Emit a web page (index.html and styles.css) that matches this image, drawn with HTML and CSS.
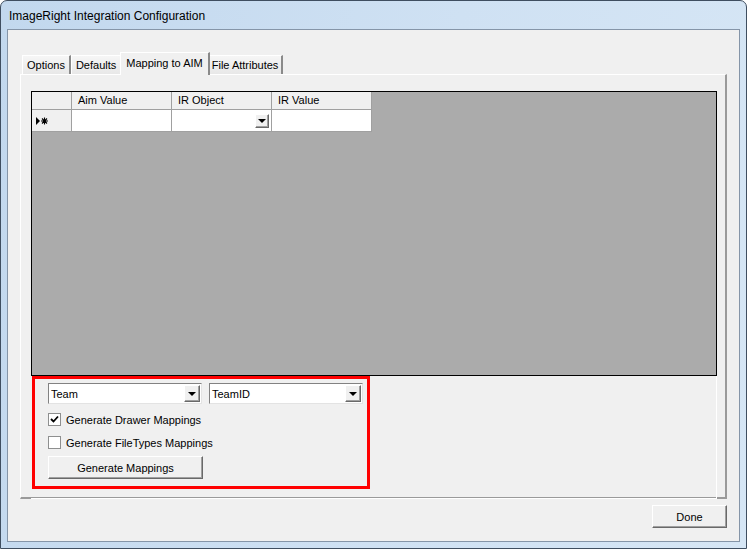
FILE: index.html
```html
<!DOCTYPE html>
<html lang="en">
<head>
  <meta charset="UTF-8" />
  <title>ImageRight Integration Configuration</title>
  <link rel="stylesheet" href="styles.css">
</head>
<body>
  <div class="window">
    <div class="titlebar">ImageRight Integration Configuration</div>
    <div class="client">
      <div class="tab-control">
        <div class="tab-strip">
          <div class="tab">Options</div>
          <div class="tab">Defaults</div>
          <div class="tab active">Mapping to AIM</div>
          <div class="tab">File Attributes</div>
        </div>
        <div class="tab-page">
          <div class="grid">
            <div class="grid-row header">
              <div class="cell row-head"></div>
              <div class="cell">Aim Value</div>
              <div class="cell">IR Object</div>
              <div class="cell">IR Value</div>
            </div>
            <div class="grid-row new-row">
              <div class="cell row-head">
                <svg width="12" height="8" viewBox="0 0 12 8">
                  <path d="M0 0 L4 4 L0 8 Z" fill="#000"/>
                  <path d="M8.5 0.5 V7.5 M5 4 H12 M6 1.5 L11 6.5 M11 1.5 L6 6.5" stroke="#000" stroke-width="1.1"/>
                </svg>
              </div>
              <div class="cell"></div>
              <div class="cell combo-cell"><span class="drop-btn small"><i class="arrow"></i></span></div>
              <div class="cell"></div>
            </div>
          </div>
          <div class="lower-panel">
            <div class="mapping-box">
              <div class="combo-row">
                <div class="combo"><span class="combo-text">Team</span><span class="drop-btn"><i class="arrow"></i></span></div>
                <div class="combo"><span class="combo-text">TeamID</span><span class="drop-btn"><i class="arrow"></i></span></div>
              </div>
              <label class="check"><span class="box checked">
                <svg width="9" height="9" viewBox="0 0 9 9"><path d="M1 4 L3.5 6.5 L8 1.5" fill="none" stroke="#000" stroke-width="1.8"/></svg>
              </span>Generate Drawer Mappings</label>
              <label class="check"><span class="box"></span>Generate FileTypes Mappings</label>
              <div class="button wide">Generate Mappings</div>
            </div>
          </div>
        </div>
      </div>
      <div class="footer">
        <div class="button done">Done</div>
      </div>
    </div>
  </div>
</body>
</html>
```

FILE: styles.css
```css
* { box-sizing: border-box; }
html, body {
  margin: 0;
  padding: 0;
  width: 747px;
  height: 549px;
  overflow: hidden;
  background: #fff;
  font-family: "Liberation Sans", Arial, sans-serif;
  font-size: 11px;
  color: #000;
}

/* window frame */
.window {
  width: 747px;
  height: 549px;
  display: flex;
  flex-direction: column;
  border: 1px solid #3f4e60;
  border-radius: 7px 7px 0 0;
  background: linear-gradient(100deg, #c2d8ee 0%, #cfe1f3 55%, #d6e6f5 100%);
  padding: 0 6px 6px 6px;
}
.titlebar {
  height: 28px;
  flex: none;
  display: flex;
  align-items: center;
  padding: 1px 0 0 2px;
  font-family: "Liberation Sans", Arial, sans-serif;
  font-size: 12px;
  color: #000;
}
.client {
  flex: 1;
  display: flex;
  flex-direction: column;
  background: #f0f0f0;
  border: 1px solid #8595a8;
  padding: 22px 12px 0 12px;
}

/* tabs */
.tab-control {
  display: flex;
  flex-direction: column;
}
.tab-strip {
  display: flex;
  height: 22px;
  padding-left: 2px;
}
.tab {
  height: 19px;
  margin-top: 3px;
  padding: 0 4px;
  line-height: 18px;
  background: linear-gradient(#f6f6f6, #e8e8e8);
  border: 1px solid #fff;
  border-bottom: none;
  border-right: 2px solid #8a8a8a;
  white-space: nowrap;
}
.tab:last-child { padding: 0 3px; }
.tab + .tab { border-left: 1px solid #fff; }
.tab.active {
  height: 23px;
  margin: 0 -2px 0 -2px;
  padding: 0 5px;
  line-height: 20px;
  background: #f0f0f0;
  position: relative;
  z-index: 1;
}
.tab-page {
  height: 425px;
  border: 1px solid #fff;
  border-right: 2px solid #9a9a9a;
  border-bottom: 2px solid #9a9a9a;
  padding: 16px 8px 0 10px;
  display: flex;
  flex-direction: column;
}

/* data grid */
.grid {
  height: 285px;
  flex: none;
  background: #ababab;
  border: 1px solid #000;
}
.grid-row {
  display: flex;
}
.cell {
  width: 100px;
  border-right: 1px solid #a0a0a0;
  border-bottom: 1px solid #a0a0a0;
  padding-left: 6px;
  white-space: nowrap;
}
.cell.row-head {
  width: 40px;
  padding-left: 4px;
  display: flex;
  align-items: center;
}
.header .cell {
  height: 18px;
  line-height: 16px;
  background: #f0f0f0;
  padding-left: 6px;
}
.new-row .cell {
  height: 22px;
  background: #fff;
}
.new-row .row-head { background: #f0f0f0; }
.combo-cell {
  display: flex;
  justify-content: flex-end;
  align-items: center;
  padding-right: 2px;
}

/* lower panel */
.lower-panel {
  height: 123px;
  flex: none;
  border-right: 1px solid #fff;
  border-bottom: 1px solid #fff;
}
.mapping-box {
  width: 338px;
  height: 113px;
  margin-left: 1px;
  border: 3px solid #ff0000;
  padding: 4px 0 0 13px;
  display: flex;
  flex-direction: column;
}
.combo-row {
  display: flex;
  gap: 7px;
}
.combo {
  width: 154px;
  height: 21px;
  display: flex;
  align-items: center;
  justify-content: space-between;
  background: #fff;
  border: 1px solid #828282;
  border-right-color: #e3e3e3;
  border-bottom-color: #e3e3e3;
  padding: 0 1px 0 2px;
}
.drop-btn {
  width: 16px;
  height: 17px;
  display: flex;
  align-items: center;
  justify-content: center;
  background: #f0f0f0;
  border: 1px solid #fff;
  border-right-color: #696969;
  border-bottom-color: #696969;
  box-shadow: inset -1px -1px 0 #a0a0a0;
}
.drop-btn.small {
  width: 14px;
  height: 14px;
}
.arrow {
  width: 0;
  height: 0;
  border-left: 4px solid transparent;
  border-right: 4px solid transparent;
  border-top: 4px solid #000;
  margin-top: 1px;
}
.check {
  display: flex;
  align-items: center;
  gap: 5px;
  height: 13px;
  margin-top: 9px;
  font-size: 11px;
}
.check + .check { margin-top: 10px; }
.box {
  width: 13px;
  height: 13px;
  background: #fff;
  border: 1px solid #8e8f8f;
  display: flex;
  align-items: center;
  justify-content: center;
}
.button {
  display: flex;
  align-items: center;
  justify-content: center;
  background: #f0f0f0;
  border: 1px solid #fff;
  border-right-color: #696969;
  border-bottom-color: #696969;
  box-shadow: inset -1px -1px 0 #a0a0a0;
}
.button.wide {
  width: 155px;
  height: 23px;
  margin-top: 7px;
}

/* footer */
.footer {
  display: flex;
  justify-content: flex-end;
  padding-top: 6px;
}
.button.done {
  width: 75px;
  height: 23px;
}
```
